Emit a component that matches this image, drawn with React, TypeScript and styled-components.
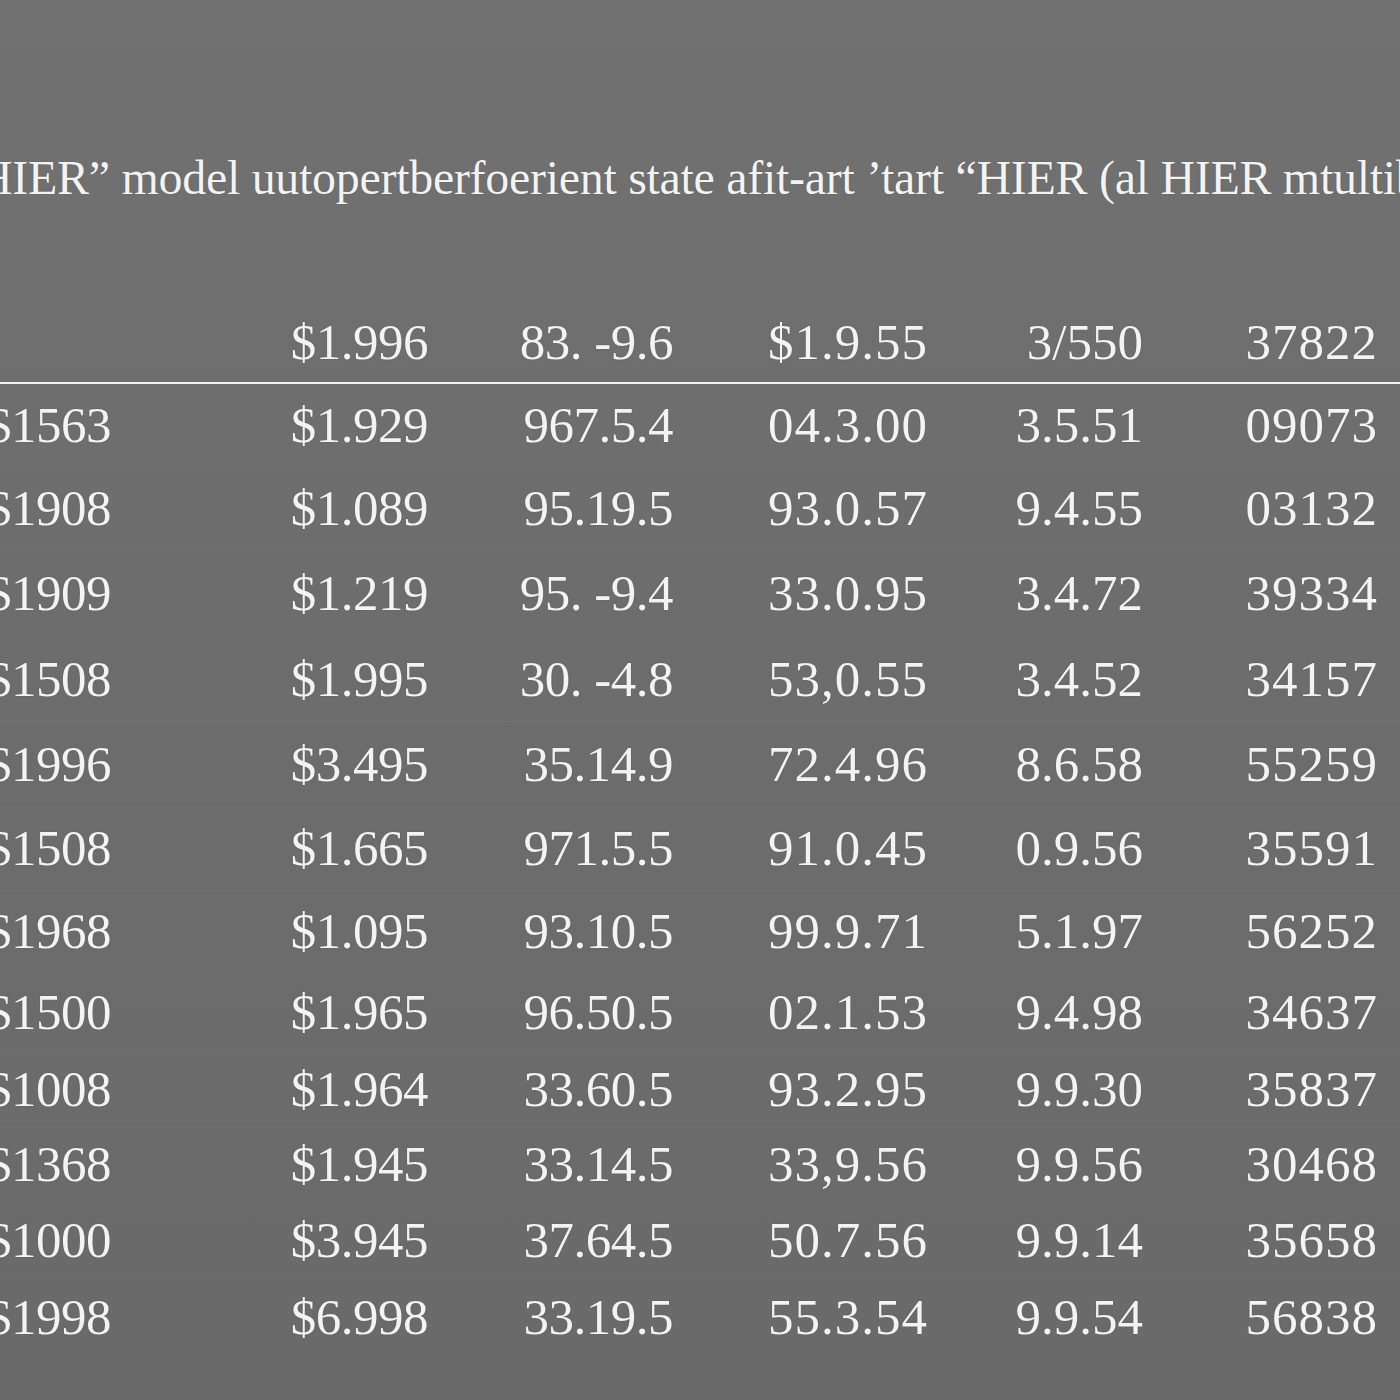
import * as React from "react"
import styled, { createGlobalStyle } from "styled-components"

const GlobalStyle = createGlobalStyle`
  html, body {
    margin: 0;
    padding: 0;
    background: #6d6d6d;
  }
  body {
    font-family: "Liberation Serif", "Times New Roman", serif;
    color: #f3f3f3;
  }
`

const Page = styled.div`
  width: 1400px;
  height: 1400px;
  overflow: hidden;
  background: linear-gradient(180deg, #717171 0%, #6d6d6d 40%, #6a6a6a 100%);
`

const Title = styled.h1`
  margin: 154px 0 0 -22px;
  font-size: 48px;
  line-height: 1;
  font-weight: normal;
  white-space: nowrap;
  letter-spacing: -0.3px;
  text-shadow: 0 0 1px rgba(0, 0, 0, 0.35);
`

const Table = styled.div`
  margin: 100px 0 0 -14px;
  width: 1414px;
`

const Row = styled.div<{ h: number; head?: boolean; first?: boolean }>`
  display: grid;
  grid-template-columns: 202px 240px 245px 255px 215px 235px;
  align-items: center;
  height: ${({ h }) => h}px;
  box-sizing: border-box;
  border-bottom: ${({ head }) => (head ? "2px solid #f2f2f2" : "none")};
  border-top: ${({ head, first }) => (head || first ? "none" : "1px solid rgba(255, 255, 255, 0.035)")};
`

const Cell = styled.div<{ col: number }>`
  font-size: 51px;
  line-height: 1;
  white-space: nowrap;
  text-align: ${({ col }) => (col === 0 ? "left" : "right")};
  letter-spacing: ${({ col }) => (col === 3 || col === 5 ? "1px" : col === 4 ? "0" : "-0.5px")};
  text-shadow: 0 0 1px rgba(0, 0, 0, 0.4);
`

const header = ["", "$1.996", "83. -9.6", "$1.9.55", "3/550", "37822"]

const rows: { h: number; cells: string[] }[] = [
  { h: 82, cells: ["$1563", "$1.929", "967.5.4", "04.3.00", "3.5.51", "09073"] },
  { h: 84, cells: ["$1908", "$1.089", "95.19.5", "93.0.57", "9.4.55", "03132"] },
  { h: 86, cells: ["$1909", "$1.219", "95. -9.4", "33.0.95", "3.4.72", "39334"] },
  { h: 85, cells: ["$1508", "$1.995", "30. -4.8", "53,0.55", "3.4.52", "34157"] },
  { h: 85, cells: ["$1996", "$3.495", "35.14.9", "72.4.96", "8.6.58", "55259"] },
  { h: 84, cells: ["$1508", "$1.665", "971.5.5", "91.0.45", "0.9.56", "35591"] },
  { h: 82, cells: ["$1968", "$1.095", "93.10.5", "99.9.71", "5.1.97", "56252"] },
  { h: 79, cells: ["$1500", "$1.965", "96.50.5", "02.1.53", "9.4.98", "34637"] },
  { h: 75, cells: ["$1008", "$1.964", "33.60.5", "93.2.95", "9.9.30", "35837"] },
  { h: 75, cells: ["$1368", "$1.945", "33.14.5", "33,9.56", "9.9.56", "30468"] },
  { h: 77, cells: ["$1000", "$3.945", "37.64.5", "50.7.56", "9.9.14", "35658"] },
  { h: 77, cells: ["$1998", "$6.998", "33.19.5", "55.3.54", "9.9.54", "56838"] },
]

export default function App() {
  return (
    <Page>
      <GlobalStyle />
      <Title>HIER” model uutopertberfoerient state afit-art ’tart “HIER (al HIER mtultible</Title>
      <Table>
        <Row h={82} head>
          {header.map((c, i) => (
            <Cell key={i} col={i}>{c}</Cell>
          ))}
        </Row>
        {rows.map((r, ri) => (
          <Row key={ri} h={r.h} first={ri === 0}>
            {r.cells.map((c, i) => (
              <Cell key={i} col={i}>{c}</Cell>
            ))}
          </Row>
        ))}
      </Table>
    </Page>
  )
}
